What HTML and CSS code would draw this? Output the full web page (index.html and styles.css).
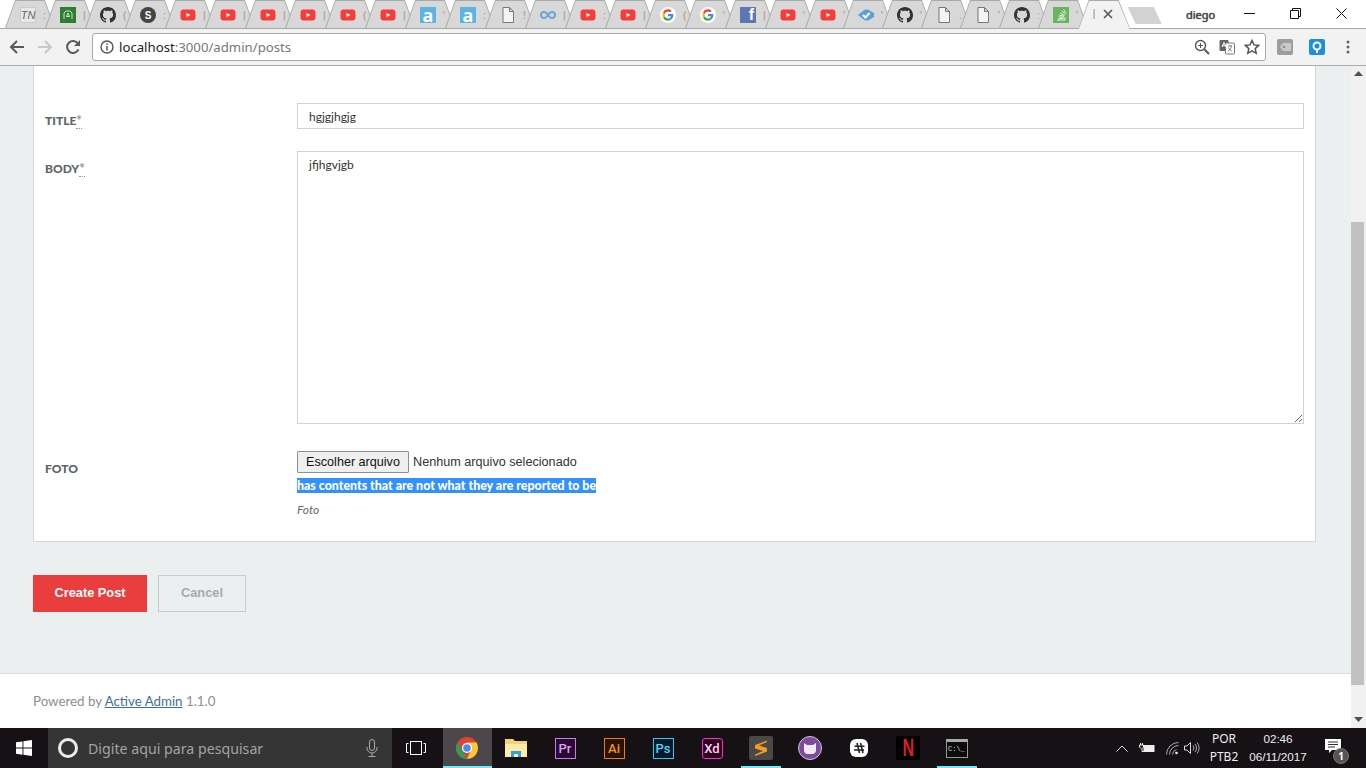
FILE: index.html
```html
<!DOCTYPE html>
<html lang="pt-BR">
<head>
<meta charset="UTF-8">
<title>New Post</title>
<link rel="stylesheet" href="styles.css">
</head>
<body>
<svg class="defs" width="0" height="0">
  <symbol id="yt" viewBox="0 0 16 16"><rect x="0.5" y="2.5" width="15" height="11" rx="3" fill="#f83a3a"/><path d="M6.5 5.7v4.6L10.5 8z" fill="#fff"/></symbol>
  <symbol id="gh" viewBox="0 0 16 16"><path fill="#333" d="M8 0C3.58 0 0 3.58 0 8c0 3.54 2.29 6.53 5.47 7.59.4.07.55-.17.55-.38 0-.19-.01-.82-.01-1.49-2.01.37-2.53-.49-2.69-.94-.09-.23-.48-.94-.82-1.13-.28-.15-.68-.52-.01-.53.63-.01 1.08.58 1.23.82.72 1.21 1.87.87 2.33.66.07-.52.28-.87.51-1.07-1.78-.2-3.64-.89-3.64-3.95 0-.87.31-1.59.82-2.15-.08-.2-.36-1.02.08-2.12 0 0 .67-.21 2.2.82.64-.18 1.32-.27 2-.27.68 0 1.36.09 2 .27 1.53-1.04 2.2-.82 2.2-.82.44 1.1.16 1.92.08 2.12.51.56.82 1.27.82 2.15 0 3.07-1.87 3.75-3.65 3.95.29.25.54.73.54 1.48 0 1.07-.01 1.93-.01 2.2 0 .21.15.46.55.38A8.013 8.013 0 0016 8c0-4.42-3.58-8-8-8z"/></symbol>
  <symbol id="doc" viewBox="0 0 16 16"><path d="M3 .5h6.5L13.5 4.5v11H3zM9.5.5v4h4" fill="#f4f4f4" stroke="#777"/></symbol>
  <symbol id="goog" viewBox="1 1 14 14">
    <circle cx="8" cy="8" r="7" fill="#fff"/>
    <path d="M12.6 8.2c0-.4 0-.7-.1-1H8v1.9h2.6c-.1.6-.5 1.2-1 1.5l1.5 1.2c.9-.8 1.5-2 1.5-3.6z" fill="#4285f4"/>
    <path d="M8 13c1.3 0 2.3-.4 3.1-1.2l-1.5-1.2c-.4.3-1 .5-1.6.5-1.3 0-2.3-.8-2.7-2L3.7 10.3C4.5 11.9 6.1 13 8 13z" fill="#34a853"/>
    <path d="M5.3 9.1c-.2-.7-.2-1.5 0-2.2L3.7 5.7c-.7 1.4-.7 3.2 0 4.6z" fill="#fbbc05"/>
    <path d="M8 5c.7 0 1.3.2 1.8.7l1.4-1.4C10.3 3.5 9.2 3 8 3 6.1 3 4.5 4.1 3.7 5.7l1.6 1.2C5.7 5.8 6.7 5 8 5z" fill="#ea4335"/>
  </symbol>
</svg>

<div class="tabstrip">
  <div class="tab"><div class="tab-fill"><span class="fav fav-tn">TN</span><span class="tab-title">:</span></div></div>
  <div class="tab"><div class="tab-fill"><span class="fav fav-green"><svg width="10" height="10" viewBox="0 0 10 10"><path d="M1 9V3l2-2h4l2 2v6M3.5 6.5 5 3l1.5 3.5z" fill="none" stroke="#cfe8c8"/></svg></span><span class="tab-title">|</span></div></div>
  <div class="tab"><div class="tab-fill"><svg class="fav"><use href="#gh"/></svg><span class="tab-title">(</span></div></div>
  <div class="tab"><div class="tab-fill"><span class="fav fav-s">S</span><span class="tab-title">:</span></div></div>
  <div class="tab"><div class="tab-fill"><svg class="fav"><use href="#yt"/></svg><span class="tab-title">|</span></div></div>
  <div class="tab"><div class="tab-fill"><svg class="fav"><use href="#yt"/></svg><span class="tab-title">|</span></div></div>
  <div class="tab"><div class="tab-fill"><svg class="fav"><use href="#yt"/></svg><span class="tab-title">|</span></div></div>
  <div class="tab"><div class="tab-fill"><svg class="fav"><use href="#yt"/></svg><span class="tab-title">|</span></div></div>
  <div class="tab"><div class="tab-fill"><svg class="fav"><use href="#yt"/></svg><span class="tab-title">(</span></div></div>
  <div class="tab"><div class="tab-fill"><svg class="fav"><use href="#yt"/></svg><span class="tab-title">|</span></div></div>
  <div class="tab"><div class="tab-fill"><span class="fav fav-a">a</span><span class="tab-title">'</span></div></div>
  <div class="tab"><div class="tab-fill"><span class="fav fav-a">a</span><span class="tab-title">:</span></div></div>
  <div class="tab"><div class="tab-fill"><svg class="fav"><use href="#doc"/></svg><span class="tab-title">!</span></div></div>
  <div class="tab"><div class="tab-fill"><svg class="fav" viewBox="0 0 16 16"><path d="M8 8C6.5 5.5 5.5 5 4 5a3 3 0 000 6c1.5 0 2.5-.5 4-3 1.5-2.5 2.5-3 4-3a3 3 0 010 6c-1.5 0-2.5-.5-4-3z" fill="none" stroke="#6fa5dc" stroke-width="2"/></svg><span class="tab-title">|</span></div></div>
  <div class="tab"><div class="tab-fill"><svg class="fav"><use href="#yt"/></svg><span class="tab-title">:</span></div></div>
  <div class="tab"><div class="tab-fill"><svg class="fav"><use href="#yt"/></svg><span class="tab-title">|</span></div></div>
  <div class="tab"><div class="tab-fill"><svg class="fav"><use href="#goog"/></svg><span class="tab-title">(</span></div></div>
  <div class="tab"><div class="tab-fill"><svg class="fav"><use href="#goog"/></svg><span class="tab-title">'</span></div></div>
  <div class="tab"><div class="tab-fill"><span class="fav fav-fb">f</span><span class="tab-title">|</span></div></div>
  <div class="tab"><div class="tab-fill"><svg class="fav"><use href="#yt"/></svg><span class="tab-title">'</span></div></div>
  <div class="tab"><div class="tab-fill"><svg class="fav"><use href="#yt"/></svg><span class="tab-title">'</span></div></div>
  <div class="tab"><div class="tab-fill"><svg class="fav" viewBox="0 0 16 16"><path d="M0 8 7 2.5h3L16 6v4l-6 3.5H7z" fill="#5c9fdc"/><path d="M5 8l2.5 2.5L11.5 6" fill="none" stroke="#fff" stroke-width="2"/></svg><span class="tab-title">'</span></div></div>
  <div class="tab"><div class="tab-fill"><svg class="fav"><use href="#gh"/></svg><span class="tab-title">'</span></div></div>
  <div class="tab"><div class="tab-fill"><svg class="fav"><use href="#doc"/></svg><span class="tab-title">.</span></div></div>
  <div class="tab"><div class="tab-fill"><svg class="fav"><use href="#doc"/></svg><span class="tab-title">'</span></div></div>
  <div class="tab"><div class="tab-fill"><svg class="fav"><use href="#gh"/></svg><span class="tab-title">:</span></div></div>
  <div class="tab"><div class="tab-fill"><span class="fav fav-so"><svg width="12" height="12" viewBox="0 0 12 12"><path d="M2 11h8V8M3.5 9.5h5M3.7 7.8l5 .5M4.2 6l4.8 1.3M5.2 4l4.3 2.5M6.8 2l3.6 3.4M8.7 .5l2.4 4" fill="none" stroke="#e9f5e4"/></svg></span><span class="tab-title">'</span></div></div>
  <div class="tab tab-active"><div class="tab-fill"><span class="tab-title tab-title-active">|</span>
    <svg class="tab-close" width="10" height="10" viewBox="0 0 10 10"><path d="M1 1l8 8M9 1 1 9" stroke="#555" stroke-width="1.6"/></svg></div></div>
  <div class="newtab"></div>
  <div class="profile">diego</div>
  <div class="winbtn"><svg width="11" height="11" viewBox="0 0 11 11"><path d="M0 5.5h11" stroke="#111"/></svg></div>
  <div class="winbtn"><svg width="11" height="11" viewBox="0 0 11 11"><path d="M.5 2.5h8v8h-8zM2.5 2.5v-2h8v8h-2" fill="none" stroke="#111"/></svg></div>
  <div class="winbtn"><svg width="11" height="11" viewBox="0 0 11 11"><path d="M.5.5l10 10M10.5.5l-10 10" stroke="#111"/></svg></div>
</div>

<div class="toolbar">
  <div class="navbtn"><svg width="16" height="16" viewBox="0 0 16 16"><path d="M15 8H2M8 2 2 8l6 6" fill="none" stroke="#5a5a5a" stroke-width="2"/></svg></div>
  <div class="navbtn"><svg width="16" height="16" viewBox="0 0 16 16"><path d="M1 8h13M8 2l6 6-6 6" fill="none" stroke="#c8c8c8" stroke-width="2"/></svg></div>
  <div class="navbtn"><svg width="16" height="16" viewBox="0 0 16 16"><path d="M13.5 10.5A6 6 0 1 1 13 4.5" fill="none" stroke="#5a5a5a" stroke-width="2"/><path d="M15 1v6H9z" fill="#5a5a5a"/></svg></div>
  <div class="omnibox">
    <svg class="omni-info" width="14" height="14" viewBox="0 0 14 14"><circle cx="7" cy="7" r="6" fill="none" stroke="#555" stroke-width="1.4"/><path d="M7 6v4.5M7 3.3v1.5" stroke="#555" stroke-width="1.5"/></svg>
    <span class="omni-host">localhost</span><span class="omni-path">:3000/admin/posts</span>
    <div class="omni-actions">
      <svg width="16" height="16" viewBox="0 0 16 16"><circle cx="6.5" cy="6.5" r="5" fill="none" stroke="#555" stroke-width="1.4"/><path d="M10.5 10.5 15 15" stroke="#555" stroke-width="2"/><path d="M4 6.5h5M6.5 4v5" stroke="#555"/></svg>
      <svg width="16" height="16" viewBox="0 0 16 16"><rect x="0.5" y="1" width="9" height="11" rx="1" fill="#666"/><rect x="6.5" y="4" width="9" height="11" rx="1" fill="#fff" stroke="#777"/><path d="M9 7h4M11 6v1M12.5 7c-.3 2-1.5 4-3.5 5M9.5 8.5c.5 1.5 2 3 3.5 3.5" fill="none" stroke="#666" stroke-width=".8"/><path d="M3 8 5 3.5 7 8M3.7 6.7h2.6" fill="none" stroke="#fff"/></svg>
      <svg width="16" height="16" viewBox="0 0 16 16"><path d="M8 1.5l2 4.4 4.7.5-3.500 3.200 1 4.700L8 11.900l-4.200 2.400 1-4.700-3.500-3.200L6 5.900z" fill="none" stroke="#555" stroke-width="1.5"/></svg>
    </div>
  </div>
  <div class="extbtn"><svg width="16" height="16" viewBox="0 0 16 16"><rect width="16" height="16" rx="2" fill="#9d9d9d"/><path d="M14 4H6L3 8l3 4h8z" fill="#c9c9c9"/><circle cx="7" cy="8" r="1.2" fill="#888"/></svg></div>
  <div class="extbtn"><svg width="16" height="16" viewBox="0 0 16 16"><rect width="16" height="16" rx="2" fill="#1a8fe3"/><circle cx="8" cy="7" r="3.5" fill="none" stroke="#fff" stroke-width="2"/><path d="M8 11v3" stroke="#fff" stroke-width="2"/></svg></div>
  <div class="extbtn"><svg width="4" height="14" viewBox="0 0 4 14"><circle cx="2" cy="2" r="1.5" fill="#666"/><circle cx="2" cy="7" r="1.5" fill="#666"/><circle cx="2" cy="12" r="1.5" fill="#666"/></svg></div>
</div>

<div class="viewport">
  <div class="page">
    <div class="content">
      <div class="panel">
        <div class="row row-title">
          <label class="field-label">Title<abbr class="req">*</abbr></label>
          <input class="text-input" type="text" value="hgjgjhgjg">
        </div>
        <div class="row row-body">
          <label class="field-label">Body<abbr class="req">*</abbr></label>
          <textarea class="text-input text-area">jfjhgvjgb</textarea>
        </div>
        <div class="row">
          <label class="field-label">Foto</label>
          <div class="file-field">
            <div class="file-line"><button class="file-btn" type="button">Escolher arquivo</button><span class="file-name">Nenhum arquivo selecionado</span></div>
            <div class="file-error"><span class="selected">has contents that are not what they are reported to be</span></div>
            <div class="file-hint">Foto</div>
          </div>
        </div>
      </div>
      <div class="actions">
        <a class="btn btn-primary">Create Post</a>
        <a class="btn btn-cancel">Cancel</a>
      </div>
    </div>
    <div class="footer">Powered by <a class="footer-link">Active Admin</a> 1.1.0</div>
  </div>
  <div class="scrollbar">
    <svg class="scroll-arrow" width="9" height="5" viewBox="0 0 9 5"><path d="M4.5 0 9 5H0z" fill="#505050"/></svg>
    <div class="scroll-thumb"></div>
    <svg class="scroll-arrow scroll-arrow-down" width="9" height="5" viewBox="0 0 9 5"><path d="M4.5 5 9 0H0z" fill="#505050"/></svg>
  </div>
</div>

<div class="taskbar">
  <div class="start"><svg width="16" height="16" viewBox="0 0 16 16"><path d="M0 2.3 6.5 1.4v6.2H0zM7.4 1.300 16 0v7.600H7.400zM0 8.500h6.500v6.200L0 13.800zM7.400 8.500H16V16l-8.600-1.300z" fill="#fff"/></svg></div>
  <div class="search">
    <span class="cortana"></span>
    <span class="search-text">Digite aqui para pesquisar</span>
    <svg class="mic" width="12" height="18" viewBox="0 0 12 18"><rect x="3.5" y="0.5" width="5" height="11" rx="2.5" fill="none" stroke="#aaa"/><path d="M1 8v1a5 5 0 0010 0V8M6 14v3M2.5 17.5h7" fill="none" stroke="#aaa"/></svg>
  </div>
  <div class="taskview"><svg width="20" height="14" viewBox="0 0 20 14"><rect x="4.5" y="0.5" width="11" height="13" fill="none" stroke="#fff"/><path d="M2.5 2.5H.5v9h2M17.5 2.5h2v9h-2" fill="none" stroke="#fff"/></svg></div>
  <div class="apps">
    <div class="app app-active"><svg width="22" height="22" viewBox="0 0 22 22"><circle cx="11" cy="11" r="11" fill="#db4437"/><path d="M11 22A11 11 0 0 1 1.5 5.5L6.5 14z" fill="#2f9e54"/><path d="M11 22a11 11 0 0 0 9.500-16.500H11l4 7z" fill="#fcc934"/><circle cx="11" cy="11" r="5" fill="#fff"/><circle cx="11" cy="11" r="3.8" fill="#4a8af4"/></svg></div>
    <div class="app"><svg width="22" height="20" viewBox="0 0 22 20"><path d="M0 1h8l2 2h12v16H0z" fill="#f3d37a"/><rect x="0" y="6" width="22" height="13" fill="#fde9a8"/><path d="M6 19v-6h10v6h-3v-3H9v3z" fill="#29a3dc"/></svg></div>
    <div class="app"><span class="adobe adobe-pr">Pr</span></div>
    <div class="app"><span class="adobe adobe-ai">Ai</span></div>
    <div class="app"><span class="adobe adobe-ps">Ps</span></div>
    <div class="app"><span class="adobe adobe-xd">Xd</span></div>
    <div class="app app-running"><svg width="24" height="24" viewBox="0 0 24 24"><rect width="24" height="24" rx="2" fill="#484848"/><path d="M18 4.5 6 9v3.5l8 2.5-8 3.5v1.500L18 15.500V12l-8-2.500L18 6z" fill="#f39c1f"/></svg></div>
    <div class="app"><svg width="24" height="24" viewBox="0 0 24 24"><circle cx="12" cy="12" r="11.5" fill="#7d4a9e" stroke="#cfc6d6"/><path d="M6 7l3 2h6l3-2v8a4 4 0 0 1-4 3h-4a4 4 0 0 1-4-3z" fill="#efe9f3"/></svg></div>
    <div class="app"><svg width="18" height="18" viewBox="0 0 18 18"><rect width="18" height="18" rx="6" fill="#fff"/><path d="M7 4l2.500 10M10.500 4l2.500 10M4.500 7.200h10M4 11h10" stroke="#222" stroke-width="1.6"/></svg></div>
    <div class="app"><span class="netflix"><span class="netflix-n">N</span></span></div>
    <div class="app app-running app-cmd"><span class="cmd">C:\_</span></div>
  </div>
  <div class="tray">
    <div class="tray-item tray-caret"><svg width="12" height="7" viewBox="0 0 12 7"><path d="M.5 6.5 6 1l5.500 5.500" fill="none" stroke="#ddd"/></svg></div>
    <div class="tray-item tray-battery"><svg width="16" height="11" viewBox="0 0 16 11"><path d="M1.500 0v2M3.500 0v2M.5 2h4v2L3 5.500v3h2M2 5.500 .5 4V2" fill="none" stroke="#eee"/><rect x="5" y="2.500" width="10" height="6" fill="#eee" stroke="#eee"/></svg></div>
    <div class="tray-item tray-wifi"><svg width="13" height="13" viewBox="0 0 13 13"><path d="M.5 12.500a12 12 0 0 1 12-12M3.500 12.500a9 9 0 0 1 9-9M6.500 12.500a6 6 0 0 1 4-5" fill="none" stroke="#aaa"/><circle cx="10.500" cy="11" r="1.300" fill="#eee"/></svg></div>
    <div class="tray-item tray-vol"><svg width="16" height="14" viewBox="0 0 16 14"><path d="M.5 5v4h2.500l3.500 3.500v-11L3 5z" fill="none" stroke="#ddd"/><path d="M9 4.500a4 4 0 0 1 0 5M11 3a6.500 6.500 0 0 1 0 8M13 1.500a9 9 0 0 1 0 11" fill="none" stroke="#aaa"/></svg></div>
    <div class="tray-text tray-lang"><div>POR</div><div>PTB2</div></div>
    <div class="tray-text tray-clock"><div>02:46</div><div>06/11/2017</div></div>
    <div class="tray-item tray-notif">
      <svg width="16" height="15" viewBox="0 0 16 15"><path d="M0 0h16v11H7l-3 3v-3H0z" fill="#fff"/><path d="M3 3h10M3 5.500h10M3 8h7" stroke="#333"/></svg>
      <span class="notif-badge">1</span>
    </div>
  </div>
</div>
</body>
</html>
```

FILE: styles.css
```css
* { box-sizing: border-box; }
html, body { height: 100%; }
body { margin: 0; width: 1366px; height: 768px; overflow: hidden; display: flex; flex-direction: column; background: #fff; font-family: "Lato", sans-serif; }
.defs { display: block; height: 0; }

.tabstrip { display: flex; height: 28px; padding-left: 5px; background: #fff; flex-shrink: 0; }
.tab { width: 50px; height: 28px; margin-right: -10px; flex-shrink: 0; background: #a9a9a9; clip-path: polygon(10px 0, 40px 0, 50px 100%, 0 100%); }
.tab:nth-child(n+21) { margin-right: -11px; }
.tab:nth-child(21) { margin-right: -12px; }
.tab:nth-child(27) { margin-right: -9.3px; }
.tab-fill { display: flex; align-items: center; height: 100%; padding: 2px 0 0 15px; background: #d8d8d8; clip-path: polygon(10.5px 1px, 39.5px 1px, 49px 100%, 1px 100%); }
.fav { display: flex; width: 16px; height: 16px; flex-shrink: 0; align-items: center; justify-content: center; }
.fav-tn { background: #e8e8e8; color: #666; font: italic 11px "Liberation Sans", sans-serif; border: 1px solid #ccc; }
.fav-green { background: #2e7d32; }
.fav-s { background: #444; color: #fff; border-radius: 50%; font: bold 10px "Liberation Sans", sans-serif; }
.fav-a { background: #5cb3e4; color: #fff; font: bold 18px/16px "Open Sans", sans-serif; }
.fav-fb { background: #5d77b0; color: #fff; font: bold 16px "Liberation Sans", sans-serif; justify-content: flex-end; padding-right: 2px; }
.fav-so { background: #68b55e; }
.tab-title { width: 3px; margin-left: 7px; overflow: hidden; font: 10px "Liberation Sans", sans-serif; color: #b0906a; }
.tab.tab-active { width: 51px; height: 29px; margin-right: 0; z-index: 2; clip-path: polygon(10px 0, 40px 0, 51px 28px, 51px 29px, 0 29px, 0 28px); }
.tab-active .tab-fill { background: #f2f2f2; padding: 0 0 2px 14px; clip-path: polygon(10.5px 1px, 39.5px 1px, 50.5px 28px, 51px 29px, 0 29px, .5px 28px); }
.tab-title-active { margin-left: 0; width: auto; color: #9a7a5a; }
.tab-close { margin-left: 8px; flex-shrink: 0; }
.newtab { width: 34px; height: 17px; margin: 7px 0 0 -2px; background: #d2d2d2; clip-path: polygon(0 0, 26px 0, 34px 100%, 8px 100%); }
.profile { width: 40px; margin-left: 24.3px; padding-top: 7px; font: 11px "Noto Sans", sans-serif; color: #444; text-shadow: 0 0 1px #222; }
.winbtn { width: 46px; display: flex; align-items: center; justify-content: center; padding-bottom: 1px; flex-shrink: 0; }

.toolbar { display: flex; align-items: center; height: 38px; flex-shrink: 0; padding-left: 3px; background: #f2f2f2; border-top: 1px solid #a9a9a9; border-bottom: 1px solid #aaa; }
.navbtn { width: 28px; display: flex; justify-content: center; }
.omnibox { display: flex; align-items: center; width: 1174px; height: 28px; margin-left: 5px; padding-left: 7px; background: #fff; border: 1px solid #aaa; border-radius: 3px; font: 13.2px "Noto Sans", sans-serif; }
.omni-info { margin-right: 5px; }
.omni-host { color: #222; }
.omni-path { color: #777; }
.omni-actions { display: flex; gap: 9px; margin-left: auto; padding-right: 5px; }
.extbtn { width: 31.5px; display: flex; justify-content: center; }
.omnibox + .extbtn { margin-left: 3.5px; }

.viewport { display: flex; flex: 1; min-height: 0; }
.page { display: flex; flex-direction: column; flex: 1; background: #eceff0; }
.content { flex: 1; padding: 0 35px 0 33px; }
.panel { height: 476px; padding: 37px 11px 0; background: #fff; border: 1px solid #d4d8da; border-top: none; }
.row { display: grid; grid-template-columns: 252px 1fr; }
.row-title { margin-bottom: 22px; }
.row-body { margin-bottom: 27px; }
.field-label { padding-top: 10px; font: 900 12px/15px "Lato", sans-serif; text-transform: uppercase; color: #5e6469; }
.req { color: #999; font-size: 13px; border-bottom: 1px dotted #999; }
.text-input { display: block; width: 100%; height: 26px; padding: 0 11px; border: 1px solid #cdd2d6; border-radius: 0; outline: none; font: 12px "Lato", sans-serif; color: #333; background: #fff; }
.text-area { height: 273px; padding: 5px 11px; line-height: 15px; resize: vertical; }
.file-line { display: flex; align-items: center; height: 22px; font: 12.65px "Liberation Sans", sans-serif; color: #333; }
.file-btn { width: 112px; height: 22px; padding: 0 0 1px; background: #efefef; border: 1px solid #8f8f8f; border-radius: 1px; font: 12.6px "Liberation Sans", sans-serif; color: #111; }
.file-name { margin-left: 4px; padding-bottom: 1px; }
.file-error { margin-top: 5px; font: 900 12.4px/15px "Lato", sans-serif; }
.selected { display: inline-block; background: #3390ff; color: #fff; }
.file-hint { margin-top: 10px; font: italic 12px/14px "Lato", sans-serif; color: #666; }
.actions { display: flex; gap: 11px; margin-top: 33px; }
.btn { display: flex; align-items: center; justify-content: center; height: 37px; padding-bottom: 2px; font: bold 12.8px "Liberation Sans", sans-serif; }
.btn-primary { width: 114px; background: #ea3d3d; color: #fff; }
.btn-cancel { width: 88px; border: 1px solid #c8cccd; color: #a3abae; }
.footer { height: 55px; padding: 18px 0 0 33px; background: #fff; border-top: 1px solid #d8dcdd; font: 13.3px/18px "Lato", sans-serif; color: #8a9094; }
.footer-link { color: #3f6f9e; text-decoration: underline; }

.scrollbar { display: flex; flex-direction: column; align-items: center; width: 15px; background: #f1f1f1; }
.scroll-arrow { margin-top: 5px; flex-shrink: 0; }
.scroll-thumb { width: 13px; height: 463px; margin: 146px 2px 0 0; background: #c1c1c1; }
.scroll-arrow-down { margin-top: 32px; }

.taskbar { display: flex; height: 40px; flex-shrink: 0; background: #151115; color: #eee; }
.start { width: 48px; display: flex; align-items: center; justify-content: center; }
.search { display: flex; align-items: center; width: 344px; padding-left: 10px; background: #353535; font: 14.2px "Noto Sans", sans-serif; }
.cortana { width: 20px; height: 20px; border: 3px solid #eee; border-radius: 50%; }
.search-text { margin-left: 10px; color: #a3a3a3; }
.mic { margin-left: auto; margin-right: 14px; }
.taskview { width: 47px; display: flex; align-items: center; justify-content: center; }
.apps { display: flex; width: 539px; margin-left: 3.5px; }
.app { width: 49px; flex-shrink: 0; display: flex; align-items: center; justify-content: center; }
.app-active { background: #4b474a; border-bottom: 2px solid #76e8f5; padding-top: 2px; }
.app-running { background: linear-gradient(#76e8f5, #76e8f5) center bottom / 40px 2px no-repeat; }
.adobe { display: flex; align-items: center; justify-content: center; width: 21px; height: 21px; border: 1px solid; font: 500 13px "Roboto", sans-serif; }
.adobe-pr { background: #2a0a33; border-color: #c77ce8; color: #d9a0f2; }
.adobe-ai { background: #2b1100; border-color: #f07b16; color: #f7931e; }
.adobe-ps { background: #041a2c; border-color: #31c5f0; color: #5bd0f5; }
.adobe-xd { background: #2e001f; border-color: #ff2bc2; color: #ffd0f0; border-radius: 3px; }
.netflix { display: flex; width: 24px; height: 24px; align-items: center; justify-content: center; background: #000; }
.netflix-n { color: #d81f26; font: bold 23px "Liberation Sans", sans-serif; transform: scaleX(.7); }
.cmd { width: 22px; height: 19px; padding: 3px 0 0 1px; background: #0c0c0c; border: 1px solid #999; border-top: 3px solid #aaa; font: 7px "Liberation Mono", monospace; color: #ddd; }
.tray { display: flex; width: 256px; margin-left: auto; }
.tray-item { display: flex; align-items: center; justify-content: center; }
.tray-caret { width: 24px; }
.tray-battery { width: 26px; }
.tray-wifi { width: 24px; }
.tray-vol { width: 16px; }
.tray-text { display: flex; flex-direction: column; justify-content: center; align-items: center; font: 12px/18px "Noto Sans", sans-serif; }
.tray-lang { width: 48px; }
.tray-clock { width: 60px; font: 11.7px/18px "Liberation Sans", sans-serif; }
.tray-notif { width: 26px; margin-left: 12px; padding-bottom: 3px; position: relative; }
.notif-badge { position: absolute; left: 13px; top: 20px; width: 16px; height: 16px; border-radius: 50%; background: #555; border: 1px solid #777; font: bold 10px/14px "Noto Sans", sans-serif; text-align: center; color: #fff; }
```
